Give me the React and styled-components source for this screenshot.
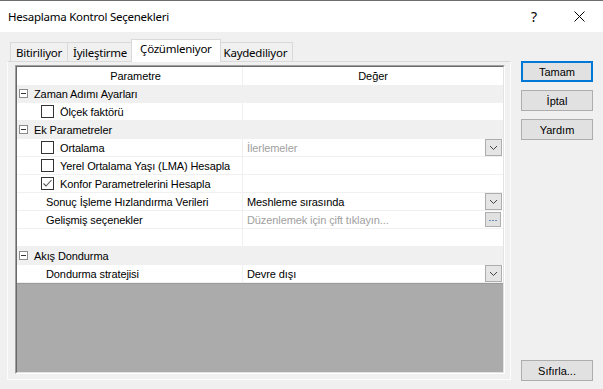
import React from 'react';
import styled, { createGlobalStyle } from 'styled-components';

const Global = createGlobalStyle`
  html, body { margin: 0; padding: 0; background: #f0f0f0; }
  body { width: 603px; height: 389px; overflow: hidden; }
  * { box-sizing: border-box; }
`;

const UI = `"Noto Sans", "Segoe UI", sans-serif`;
const SANS = `"Liberation Sans", Arial, sans-serif`;

const Window = styled.div`
  width: 603px;
  height: 389px;
  background: #f0f0f0;
  border-top: 1px solid #6d6d6d;
  display: flex;
  flex-direction: column;
  overflow: hidden;
`;

const TitleBar = styled.div`
  height: 31px;
  flex: none;
  background: #fff;
  display: flex;
  align-items: center;
  padding-left: 8px;
  font-family: ${UI};
  font-size: 11.5px;
  color: #000;
`;

const Title = styled.div`
  flex: 1;
  letter-spacing: -0.25px;
`;

const CaptionBtn = styled.div`
  width: ${p => p.$w}px;
  height: 31px;
  display: flex;
  align-items: center;
  justify-content: center;
  font-family: ${UI};
  font-size: 14px;
  color: #000;
`;

const Main = styled.div`
  flex: 1;
  display: flex;
  gap: 10px;
  padding: 7px 10px 0 7px;
`;

const TabArea = styled.div`
  width: 504px;
  display: flex;
  flex-direction: column;
`;

const TabStrip = styled.div`
  height: 22px;
  display: flex;
  align-items: flex-end;
  padding-left: 3px;
  position: relative;
  z-index: 1;
`;

const Tab = styled.div`
  height: ${p => (p.$active ? 23 : 19)}px;
  margin: 0 ${p => (p.$active ? -2 : 0)}px ${p => (p.$active ? -1 : 0)}px ${p => (p.$active ? -2 : -1)}px;
  padding: ${p => (p.$active ? '1px 8px 0' : '0 5px')};
  background: ${p => (p.$active ? '#fff' : '#f0f0f0')};
  border: 1px solid #d9d9d9;
  border-bottom: ${p => (p.$active ? 'none' : '0')};
  position: relative;
  z-index: ${p => (p.$active ? 2 : 1)};
  display: flex;
  align-items: ${p => (p.$active ? 'flex-start' : 'center')};
  font-family: ${UI};
  font-size: 11.5px;
  letter-spacing: -0.25px;
  color: #000;
  white-space: nowrap;
  &:first-child { margin-left: 0; }
`;

const Panel = styled.div`
  height: 319px;
  border: 1px solid #fcfcfc;
  border-top-color: #d9d9d9;
  background: #f0f0f0;
  padding: 3px 5px 5px 7px;
  display: flex;
`;

const GridOuter = styled.div`
  flex: 1;
  border: 1px solid #fff;
  border-top-color: #a0a0a0;
  border-left-color: #a0a0a0;
  display: flex;
`;

const Grid = styled.div`
  flex: 1;
  border: 1px solid #e3e3e3;
  border-top-color: #696969;
  border-left-color: #696969;
  display: flex;
  flex-direction: column;
  background: #fff;
  font-family: ${SANS};
  font-size: 11px;
  letter-spacing: -0.1px;
  color: #000;
`;

const Row = styled.div`
  height: 18px;
  flex: none;
  display: flex;
  background: ${p => (p.$group ? '#f0f0f0' : '#fff')};
  border-bottom: 1px solid #f0f0f0;
`;

const HeaderRow = styled(Row)`
  border-bottom: none;
`;

const HeaderCell = styled.div`
  width: ${p => (p.$first ? '225px' : 'auto')};
  flex: ${p => (p.$first ? 'none' : 1)};
  display: flex;
  align-items: center;
  justify-content: center;
  padding-left: ${p => (p.$first ? 12 : 0)}px;
  border-left: ${p => (p.$first ? 'none' : '1px solid #f0f0f0')};
`;

const NameCell = styled.div`
  width: 225px;
  flex: none;
  display: flex;
  align-items: center;
  padding-left: ${p => p.$indent}px;
  gap: 6px;
  white-space: nowrap;
`;

const GroupCell = styled.div`
  flex: 1;
  display: flex;
  align-items: center;
  padding-left: 2px;
  gap: 6px;
`;

const ValueCell = styled.div`
  flex: 1;
  display: flex;
  align-items: center;
  padding: 0 1px 0 4px;
  border-left: 1px solid #f0f0f0;
  color: ${p => (p.$muted ? '#a0a0a0' : '#000')};
  white-space: nowrap;
`;

const ValueText = styled.span`
  flex: 1;
`;

const Toggle = styled.span`
  width: 9px;
  height: 9px;
  border: 1px solid #8c8c8c;
  background: #fff;
  display: flex;
  align-items: center;
  justify-content: center;
  &::after {
    content: '';
    width: 5px;
    height: 1px;
    background: #333;
  }
`;

const Check = styled.span`
  width: 13px;
  height: 13px;
  flex: none;
  border: 1px solid #333;
  background: #fff;
  display: flex;
  align-items: center;
  justify-content: center;
`;

const DropBtn = styled.span`
  width: 17px;
  height: 17px;
  flex: none;
  border: 1px solid #adadad;
  background: #e5e5e5;
  display: flex;
  align-items: center;
  justify-content: center;
`;

const DotsBtn = styled.span`
  width: 16px;
  height: 15px;
  flex: none;
  margin-right: 1px;
  border: 1px solid #adadad;
  background: #e1e1e1;
  display: flex;
  align-items: flex-end;
  justify-content: center;
  padding-bottom: 4px;
`;

const Empty = styled.div`
  flex: 1;
  background: #ababab;
  border-top: 1px solid #9a9a9a;
`;

const ButtonCol = styled.div`
  width: 72px;
  padding-top: 22px;
  padding-bottom: 8px;
  display: flex;
  flex-direction: column;
  gap: 8px;
`;

const Button = styled.div`
  height: 21px;
  flex: none;
  background: #e1e1e1;
  border: ${p => (p.$default ? '2px solid #0078d7' : '1px solid #adadad')};
  display: flex;
  align-items: center;
  justify-content: center;
  font-family: ${SANS};
  font-size: 11px;
  color: #000;
  margin-top: ${p => (p.$bottom ? 'auto' : '0')};
`;

const Chevron = () => (
  <svg width="9" height="6" viewBox="0 0 9 6">
    <path d="M1 1 L4.5 4.5 L8 1" fill="none" stroke="#444" strokeWidth="1" />
  </svg>
);

const Tick = () => (
  <svg width="11" height="11" viewBox="0 0 11 11">
    <path d="M1.5 5.5 L4 8 L9.5 2" fill="none" stroke="#555" strokeWidth="1.1" />
  </svg>
);

const Dots = () => (
  <svg width="8" height="2" viewBox="0 0 8 2">
    <rect x="0" y="0" width="2" height="1" fill="#6b8fb8" />
    <rect x="3" y="0" width="2" height="1" fill="#6b8fb8" />
    <rect x="6" y="0" width="2" height="1" fill="#6b8fb8" />
  </svg>
);

const CloseIcon = () => (
  <svg width="11" height="11" viewBox="0 0 11 11">
    <path d="M0.5 0.5 L10.5 10.5 M10.5 0.5 L0.5 10.5" stroke="#000" strokeWidth="1" />
  </svg>
);

const GroupRow = ({ label }) => (
  <Row $group>
    <GroupCell>
      <Toggle />
      {label}
    </GroupCell>
  </Row>
);

const PropRow = ({ label, check, checked, value, muted, control }) => (
  <Row>
    <NameCell $indent={check ? 24 : 29}>
      {check && <Check>{checked && <Tick />}</Check>}
      {label}
    </NameCell>
    <ValueCell $muted={muted}>
      <ValueText>{value}</ValueText>
      {control === 'drop' && <DropBtn><Chevron /></DropBtn>}
      {control === 'dots' && <DotsBtn><Dots /></DotsBtn>}
    </ValueCell>
  </Row>
);

export default function App() {
  const tabs = ['Bitiriliyor', 'İyileştirme', 'Çözümleniyor', 'Kaydediliyor'];
  return (
    <>
      <Global />
      <Window>
        <TitleBar>
          <Title>Hesaplama Kontrol Seçenekleri</Title>
          <CaptionBtn $w={44}>?</CaptionBtn>
          <CaptionBtn $w={46}><CloseIcon /></CaptionBtn>
          <CaptionBtn $w={1} />
        </TitleBar>
        <Main>
          <TabArea>
            <TabStrip>
              {tabs.map(t => (
                <Tab key={t} $active={t === 'Çözümleniyor'}>{t}</Tab>
              ))}
            </TabStrip>
            <Panel>
              <GridOuter>
                <Grid>
                  <HeaderRow>
                    <HeaderCell $first>Parametre</HeaderCell>
                    <HeaderCell>Değer</HeaderCell>
                  </HeaderRow>
                  <GroupRow label="Zaman Adımı Ayarları" />
                  <PropRow check label="Ölçek faktörü" />
                  <GroupRow label="Ek Parametreler" />
                  <PropRow check label="Ortalama" value="İlerlemeler" muted control="drop" />
                  <PropRow check label="Yerel Ortalama Yaşı (LMA) Hesapla" />
                  <PropRow check checked label="Konfor Parametrelerini Hesapla" />
                  <PropRow label="Sonuç İşleme Hızlandırma Verileri" value="Meshleme sırasında" control="drop" />
                  <PropRow label="Gelişmiş seçenekler" value="Düzenlemek için çift tıklayın..." muted control="dots" />
                  <PropRow label="" />
                  <GroupRow label="Akış Dondurma" />
                  <PropRow label="Dondurma stratejisi" value="Devre dışı" control="drop" />
                  <Empty />
                </Grid>
              </GridOuter>
            </Panel>
          </TabArea>
          <ButtonCol>
            <Button $default>Tamam</Button>
            <Button>İptal</Button>
            <Button>Yardım</Button>
            <Button $bottom>Sıfırla...</Button>
          </ButtonCol>
        </Main>
      </Window>
    </>
  );
}
